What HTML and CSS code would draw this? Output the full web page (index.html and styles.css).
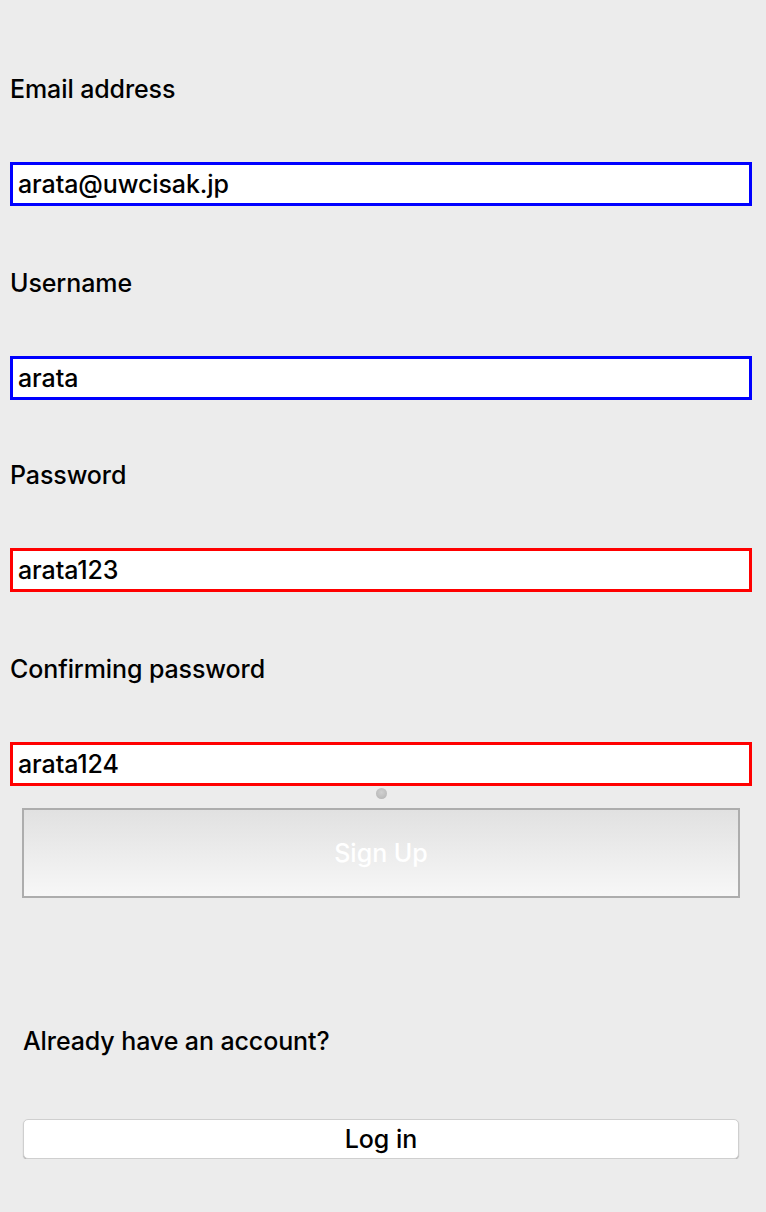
FILE: index.html
```html
<!DOCTYPE html>
<html lang="en">
<head>
<meta charset="utf-8">
<title>Sign Up</title>
<link rel="stylesheet" href="styles.css">
</head>
<body>
<form class="form">
  <div class="field">
    <label class="label">Email address</label>
    <input class="input ok" type="text" value="arata@uwcisak.jp">
  </div>
  <div class="field">
    <label class="label">Username</label>
    <input class="input ok" type="text" value="arata">
  </div>
  <div class="field">
    <label class="label">Password</label>
    <input class="input bad" type="text" value="arata123">
  </div>
  <div class="field last">
    <label class="label">Confirming password</label>
    <input class="input bad" type="text" value="arata124">
  </div>
  <div class="dot-row"><span class="dot"></span></div>
  <button class="signup" type="button" disabled>Sign Up</button>
  <p class="already">Already have an account?</p>
  <button class="login" type="button">Log in</button>
</form>
</body>
</html>
```
FILE: styles.css
```css
html, body {
  margin: 0;
  padding: 0;
  background: #ececec;
}
body {
  font-family: Inter, "Liberation Sans", sans-serif;
  color: #000;
}
.form {
  display: flex;
  flex-direction: column;
  padding: 75px 14px 0 10px;
}
.field {
  display: flex;
  flex-direction: column;
  margin-bottom: 63px;
}
.field:nth-child(2) {
  margin-bottom: 61px;
}
.field.last {
  margin-bottom: 0;
}
.label {
  font-size: 25px;
  font-weight: 500;
  line-height: 28px;
  height: 28px;
  margin-bottom: 59px;
  letter-spacing: -0.1px;
}
.input {
  box-sizing: border-box;
  width: 742px;
  height: 44px;
  border: 3px solid;
  background: #fff;
  font-family: Inter, "Liberation Sans", sans-serif;
  font-size: 25px;
  font-weight: 500;
  letter-spacing: -0.1px;
  padding: 0 5px;
  margin: 0;
  color: #000;
  outline: none;
}
.input.ok { border-color: #0000ff; }
.input.bad { border-color: #ff0000; }
.dot-row {
  display: flex;
  justify-content: center;
  align-items: flex-start;
  width: 742px;
  height: 22px;
  padding-top: 2px;
  box-sizing: border-box;
}
.dot {
  width: 11px;
  height: 11px;
  border-radius: 50%;
  background: radial-gradient(circle at 50% 40%, #d0d0d0, #b2b2b2);
}
.signup {
  box-sizing: border-box;
  margin: 0 0 0 12px;
  width: 718px;
  height: 90px;
  border: 2px solid #adadad;
  background: linear-gradient(#e1e1e1, #f7f7f7);
  color: #fff;
  font-family: Inter, "Liberation Sans", sans-serif;
  font-size: 25px;
  font-weight: 500;
  padding: 0;
}
.already {
  margin: 129px 0 0 13px;
  font-size: 25px;
  font-weight: 500;
  letter-spacing: -0.1px;
  line-height: 28px;
}
.login {
  box-sizing: border-box;
  margin: 64px 0 0 13px;
  width: 716px;
  height: 40px;
  border: 1px solid #cfcfcf;
  border-radius: 5px;
  background: #fff;
  box-shadow: 0 1px 1px rgba(0,0,0,0.25);
  font-family: Inter, "Liberation Sans", sans-serif;
  font-size: 25px;
  font-weight: 500;
  color: #000;
  padding: 0;
}
```
